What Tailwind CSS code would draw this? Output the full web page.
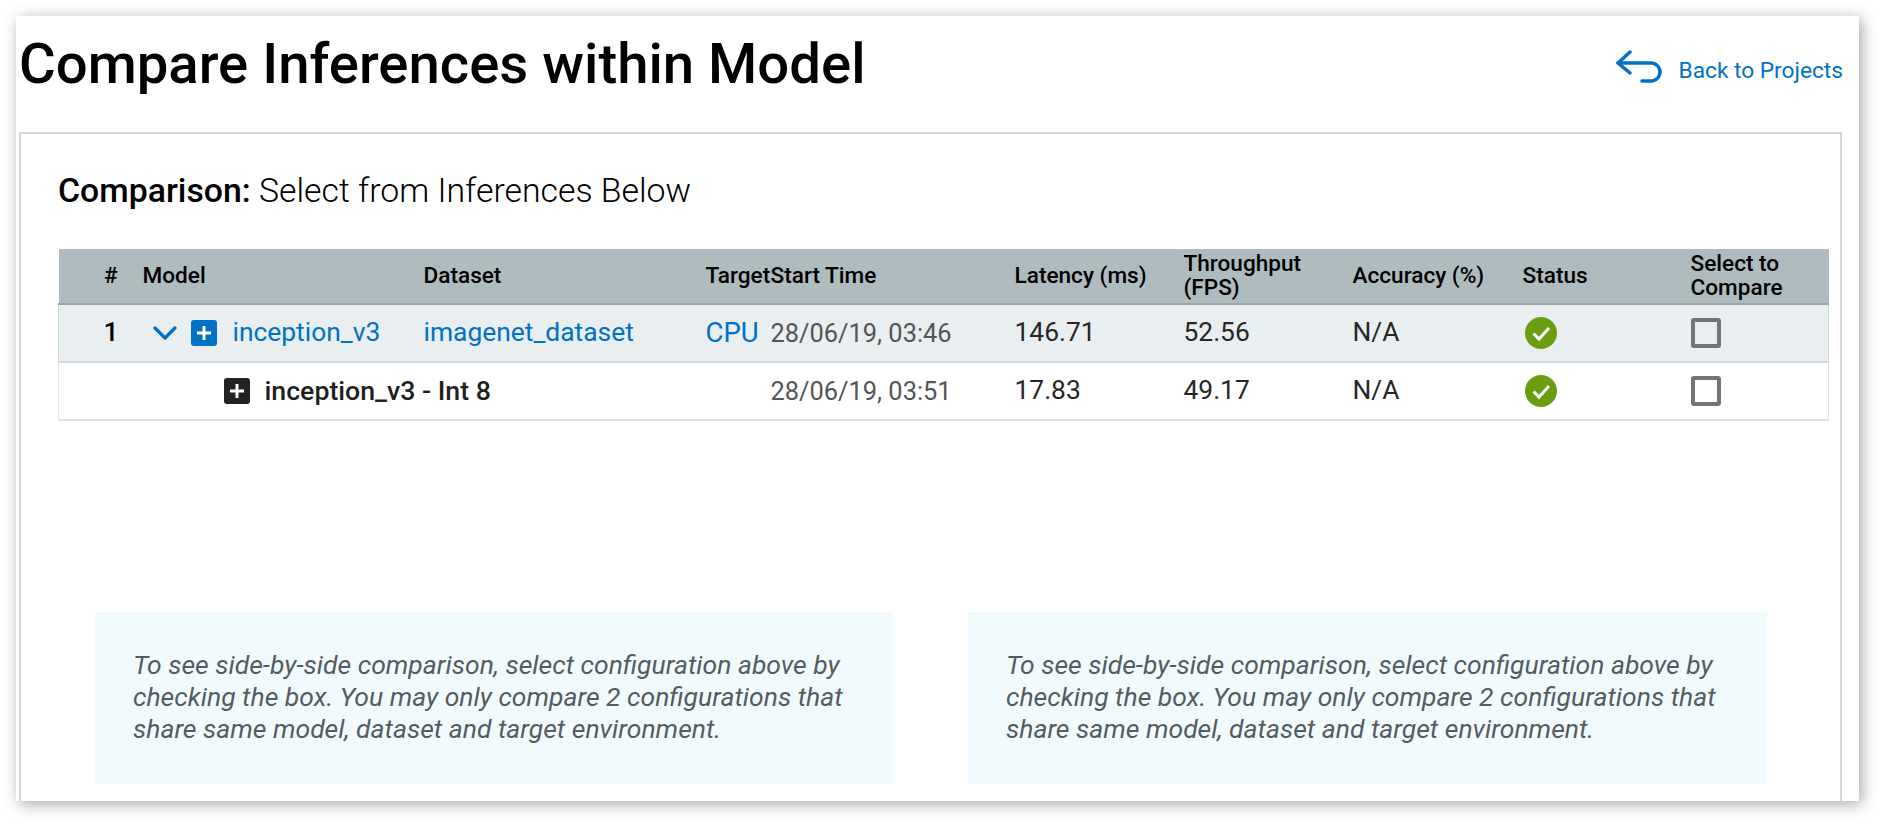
<!DOCTYPE html>
<html lang="en">
<head>
  <meta charset="UTF-8">
  <title>Compare Inferences within Model</title>
  <script src="https://cdn.jsdelivr.net/npm/@tailwindcss/browser@4"></script>
</head>
<body class="bg-white font-['Roboto',sans-serif] text-black overflow-hidden">
  <div class="h-[825px] pt-4 pl-4">
    <div class="w-[1843px] h-[785px] bg-white shadow-[3px_3px_14px_rgba(0,0,0,0.35)] flex flex-col overflow-hidden">

      <!-- Header -->
      <div class="h-[116px] flex justify-between pl-[3px] pr-[16px]">
        <h1 class="text-[56.3px] leading-[64px] font-medium mt-[16px]">Compare Inferences within Model</h1>
        <a class="flex items-start gap-[16px] text-[#0071c5] text-[22.7px] leading-[26px] font-normal pt-[34px]">
          <svg class="w-[47px] h-[34px]" viewBox="0 0 47 34" fill="none" stroke="#0071c5" stroke-width="3.5" stroke-linecap="round" stroke-linejoin="round">
            <path d="M14 2 L2 13 L14 23"/>
            <path d="M2 13 H35 A9 9 0 0 1 35 31 H26"/>
          </svg>
          <span class="pt-[8px]">Back to Projects</span>
        </a>
      </div>

      <!-- Comparison panel -->
      <div class="ml-[3px] mr-[17px] flex-1 border-2 border-b-0 border-[#cfd8dc] pl-[37px] pr-[12px]">
        <h2 class="text-[33.8px] leading-[36px] font-light mt-[39px]"><span class="font-medium">Comparison:</span> Select from Inferences Below</h2>

        <table class="table-fixed w-[1770px] border-collapse mt-[40px] text-[26.4px] text-[#262626] whitespace-nowrap">
          <colgroup>
            <col class="w-[75px]"><col class="w-[281px]"><col class="w-[282px]"><col class="w-[65px]"><col class="w-[244px]">
            <col class="w-[169px]"><col class="w-[169px]"><col class="w-[170px]"><col class="w-[168px]"><col class="w-[147px]">
          </colgroup>
          <thead>
            <tr class="h-[55px] bg-[#aebbbf] border-b-2 border-[#9aa8ad] text-black text-[22.6px] leading-[24px] font-medium text-left">
              <th class="font-medium text-right pr-[16px]">#</th>
              <th class="font-medium pl-[9px]">Model</th>
              <th class="font-medium pl-[9px]">Dataset</th>
              <th class="font-medium pl-[9px]">Target</th>
              <th class="font-medium pl-[9px]">Start Time</th>
              <th class="font-medium pl-[9px]">Latency (ms)</th>
              <th class="font-medium pl-[9px]">Throughput<br>(FPS)</th>
              <th class="font-medium pl-[9px]">Accuracy (%)</th>
              <th class="font-medium pl-[9px]">Status</th>
              <th class="font-medium pl-[9px]">Select to<br>Compare</th>
            </tr>
          </thead>
          <tbody>
            <tr class="h-[58px] bg-[#e9eef1] border-b-2 border-x border-[#cfd8dc]">
              <td class="text-right pr-[15px] font-medium text-black">1</td>
              <td class="pl-[9px]">
                <div class="flex items-center text-[#0071c5]">
                  <svg class="w-[24px] h-[14px] ml-[10px] mr-[14px]" viewBox="0 0 24 14" fill="none" stroke="#0071c5" stroke-width="3.2" stroke-linecap="round" stroke-linejoin="round"><path d="M2 2 L12 12 L22 2"/></svg>
                  <span class="w-[26px] h-[26px] rounded-[3px] bg-[#0071c5] flex items-center justify-center mr-[16px]">
                    <svg class="w-[14px] h-[14px]" viewBox="0 0 14 14" stroke="#fff" stroke-width="3"><path d="M7 0 V14 M0 7 H14"/></svg>
                  </span>
                  <span>inception_v3</span>
                </div>
              </td>
              <td class="pl-[9px] text-[#0071c5]">imagenet_dataset</td>
              <td class="pl-[9px] text-[#0071c5] text-[27.5px]">CPU</td>
              <td class="pl-[9px] text-[#555] text-[25.4px]">28/06/19, 03:46</td>
              <td class="pl-[9px]">146.71</td>
              <td class="pl-[9px]">52.56</td>
              <td class="pl-[9px]">N/A</td>
              <td class="pl-[11px]">
                <svg class="w-[32px] h-[32px] block" viewBox="0 0 32 32"><circle cx="16" cy="16" r="16" fill="#6a9e10"/><path d="M8.5 16.5 L14 22 L24 11" fill="none" stroke="#fff" stroke-width="3"/></svg>
              </td>
              <td class="pl-[9px]"><span class="block w-[30px] h-[30px] border-4 border-[#747474] rounded-[3px]"></span></td>
            </tr>
            <tr class="h-[58px] bg-white border-b-2 border-x border-[#dfe4e6]">
              <td></td>
              <td class="pl-[9px]" colspan="2">
                <div class="flex items-center font-medium text-[#1f1f1f] text-[26.7px] pl-[81px]">
                  <span class="w-[26px] h-[26px] rounded-[3px] bg-[#222] flex items-center justify-center mr-[15px]">
                    <svg class="w-[14px] h-[14px]" viewBox="0 0 14 14" stroke="#fff" stroke-width="3"><path d="M7 0 V14 M0 7 H14"/></svg>
                  </span>
                  <span>inception_v3 - Int 8</span>
                </div>
              </td>
              <td></td>
              <td class="pl-[9px] text-[#555] text-[25.4px]">28/06/19, 03:51</td>
              <td class="pl-[9px]">17.83</td>
              <td class="pl-[9px]">49.17</td>
              <td class="pl-[9px]">N/A</td>
              <td class="pl-[11px]">
                <svg class="w-[32px] h-[32px] block" viewBox="0 0 32 32"><circle cx="16" cy="16" r="16" fill="#6a9e10"/><path d="M8.5 16.5 L14 22 L24 11" fill="none" stroke="#fff" stroke-width="3"/></svg>
              </td>
              <td class="pl-[9px]"><span class="block w-[30px] h-[30px] border-4 border-[#747474] rounded-[3px]"></span></td>
            </tr>
          </tbody>
        </table>

        <!-- Hints -->
        <div class="flex gap-[75px] ml-[37px] mt-[191px]">
          <div class="w-[798px] h-[172px] bg-[#f1fbfe] px-[38px] pt-[37px] text-[26.5px] leading-[32px] italic text-[#555c60]">
            To see side-by-side comparison, select configuration above by checking the box. You may only compare 2 configurations that share same model, dataset and target environment.
          </div>
          <div class="w-[799px] h-[172px] bg-[#f1fbfe] px-[38px] pt-[37px] text-[26.5px] leading-[32px] italic text-[#555c60]">
            To see side-by-side comparison, select configuration above by checking the box. You may only compare 2 configurations that share same model, dataset and target environment.
          </div>
        </div>
      </div>
    </div>
  </div>
</body>
</html>
